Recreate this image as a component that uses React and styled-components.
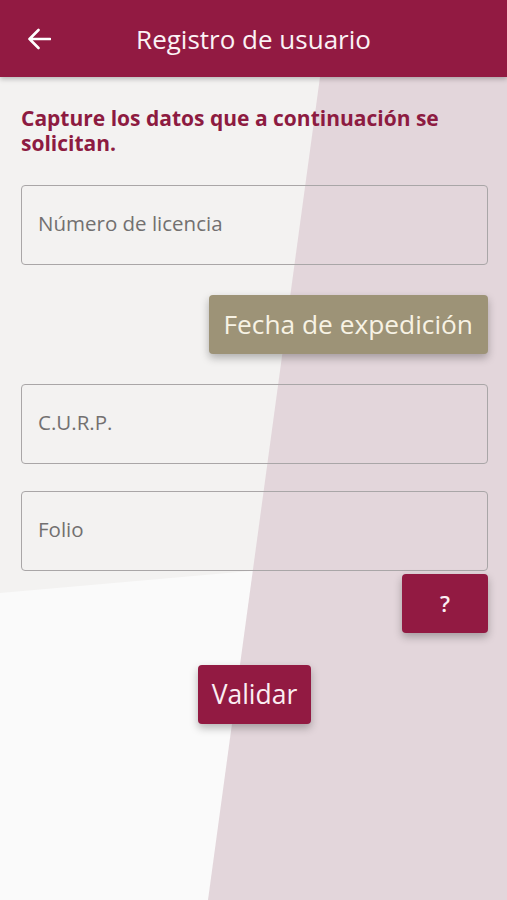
import React from 'react';
import styled, { createGlobalStyle } from 'styled-components';

const GlobalStyle = createGlobalStyle`
  body {
    margin: 0;
    font-family: "Open Sans", "Noto Sans", sans-serif;
    background: #fafafa;
  }
`;

const Page = styled.div`
  position: relative;
  width: 507px;
  height: 900px;
  overflow: hidden;
  background: #fafafa;
`;

const Shade = styled.div`
  position: absolute;
  inset: 0;
  background: #f3f2f1;
  clip-path: polygon(0 77px, 330px 77px, 262px 570px, 0 593px);
`;

const Tint = styled.div`
  position: absolute;
  inset: 0;
  background: #e3d6db;
  clip-path: polygon(320px 77px, 507px 77px, 507px 900px, 208px 900px);
`;

const Header = styled.header`
  position: relative;
  z-index: 2;
  height: 77px;
  display: flex;
  align-items: center;
  justify-content: center;
  background: #921a42;
  box-shadow: 0 2px 5px rgba(0, 0, 0, 0.25);
`;

const BackButton = styled.button`
  position: absolute;
  left: 27px;
  top: 28px;
  padding: 0;
  border: none;
  background: none;
  display: flex;
  cursor: pointer;
`;

const Title = styled.h1`
  margin: 0;
  font-size: 26px;
  font-weight: 400;
  color: #fbf2f5;
`;

const Content = styled.main`
  position: relative;
  z-index: 1;
  padding: 29px 19px 0 21px;
  display: flex;
  flex-direction: column;
`;

const Intro = styled.p`
  margin: 0 0 29px;
  font-size: 21px;
  line-height: 25px;
  font-weight: 700;
  color: #8d1b41;
`;

const Field = styled.input`
  box-sizing: border-box;
  width: 100%;
  height: 80px;
  margin-top: ${(p) => p.$gap || 0}px;
  padding: 0 16px 4px;
  border: 1.5px solid #a9a6a7;
  border-radius: 4px;
  background: transparent;
  font-family: inherit;
  font-size: 20.5px;
  color: #555;
  outline: none;

  &::placeholder {
    color: #727070;
  }
`;

const ActionRow = styled.div`
  display: flex;
  justify-content: ${(p) => p.$align || 'flex-end'};
  margin-top: ${(p) => p.$gap || 0}px;
`;

const Button = styled.button`
  height: ${(p) => p.$height || 59}px;
  min-width: ${(p) => p.$width || 0}px;
  padding: 0 ${(p) => p.$pad || 14}px 2px;
  border: none;
  border-radius: 4px;
  background: ${(p) => (p.$tone === 'khaki' ? '#9d9377' : '#921a42')};
  color: ${(p) => (p.$tone === 'khaki' ? '#f7f2e4' : '#fbeef2')};
  font-family: inherit;
  font-size: ${(p) => p.$size || 22}px;
  font-weight: ${(p) => p.$weight || 400};
  box-shadow: 0 4px 8px rgba(0, 0, 0, 0.28);
  cursor: pointer;
`;

function ArrowBack() {
  return (
    <svg width="24" height="22" viewBox="0 0 24 22" fill="none">
      <path d="M23 11H2.5M11.5 2L2.5 11l9 9" stroke="#fff" strokeWidth="2.6" strokeLinecap="round" strokeLinejoin="round" />
    </svg>
  );
}

export default function App() {
  return (
    <>
      <GlobalStyle />
      <Page>
        <Shade />
        <Tint />
        <Header>
          <BackButton aria-label="Regresar">
            <ArrowBack />
          </BackButton>
          <Title>Registro de usuario</Title>
        </Header>
        <Content>
          <Intro>Capture los datos que a continuación se solicitan.</Intro>
          <Field placeholder="Número de licencia" />
          <ActionRow $gap={30}>
            <Button $tone="khaki" $size={26.3} $pad={15}>Fecha de expedición</Button>
          </ActionRow>
          <Field $gap={30} placeholder="C.U.R.P." />
          <Field $gap={27} placeholder="Folio" />
          <ActionRow $gap={3}>
            <Button $width={86} $size={22} $weight={600}>?</Button>
          </ActionRow>
          <ActionRow $gap={32} $align="center">
            <Button $size={26.5}>Validar</Button>
          </ActionRow>
        </Content>
      </Page>
    </>
  );
}
